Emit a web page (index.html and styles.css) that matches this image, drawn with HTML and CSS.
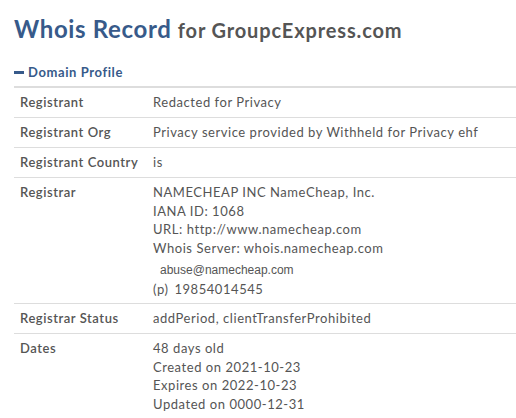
FILE: index.html
```html
<!DOCTYPE html>
<html>
<head>
<meta charset="utf-8">
<link rel="stylesheet" href="styles.css">
</head>
<body>
<div class="page">
  <h1 class="title"><span class="title-main">Whois Record</span> <span class="title-sub">for GroupcExpress.com</span></h1>
  <div class="section-head"><span class="dash"></span><span class="section-name">Domain Profile</span></div>
  <div class="table">
    <div class="row">
      <div class="label">Registrant</div>
      <div class="value">Redacted for Privacy</div>
    </div>
    <div class="row">
      <div class="label">Registrant Org</div>
      <div class="value">Privacy service provided by Withheld for Privacy ehf</div>
    </div>
    <div class="row">
      <div class="label">Registrant Country</div>
      <div class="value">is</div>
    </div>
    <div class="row">
      <div class="label">Registrar</div>
      <div class="value">
        <div>NAMECHEAP INC NameCheap, Inc.</div>
        <div>IANA ID: 1068</div>
        <div>URL: http://www.namecheap.com</div>
        <div>Whois Server: whois.namecheap.com</div>
        <div class="email">abuse@namecheap.com</div>
        <div class="phone"><span class="phone-tag">(p)</span>19854014545</div>
      </div>
    </div>
    <div class="row">
      <div class="label">Registrar Status</div>
      <div class="value">addPeriod, clientTransferProhibited</div>
    </div>
    <div class="row">
      <div class="label">Dates</div>
      <div class="value">
        <div>48 days old</div>
        <div>Created on 2021-10-23</div>
        <div>Expires on 2022-10-23</div>
        <div>Updated on 0000-12-31</div>
      </div>
    </div>
  </div>
</div>
</body>
</html>
```

FILE: styles.css
```css
html, body {
  margin: 0;
  padding: 0;
  background: #fff;
}
body {
  font-family: Lato, "Open Sans", sans-serif;
  color: #555;
  font-size: 13px;
  line-height: 18.67px;
}
.page {
  padding: 11px 0 0 14px;
}
.title {
  margin: 0;
  font-weight: 700;
  line-height: 34px;
  white-space: nowrap;
}
.title-main {
  font-size: 24px;
  color: #375a8a;
  letter-spacing: 0.65px;
}
.title-sub {
  font-size: 20px;
  color: #555;
  letter-spacing: 0.85px;
}
.section-head {
  display: flex;
  align-items: center;
  margin-top: 16px;
  height: 18px;
}
.dash {
  width: 10px;
  height: 3px;
  background: #375a8a;
  margin-right: 4px;
}
.section-name {
  font-size: 13px;
  font-weight: 700;
  color: #375a8a;
  letter-spacing: 0.6px;
}
.table {
  margin-top: 5px;
  border-top: 2px solid #ddd;
}
.row {
  display: flex;
  border-bottom: 1px solid #ddd;
  padding: 5px 0 5.33px 0;
  letter-spacing: 0.55px;
}
.label {
  width: 133px;
  padding-left: 6px;
  flex: none;
  font-weight: 600;
  color: #555;
}
.value {
  color: #555;
  white-space: nowrap;
}
.email {
  font-family: "Liberation Sans", Arial, sans-serif;
  font-size: 12px;
  letter-spacing: 0;
  padding-left: 7px;
  margin-top: 3px;
  line-height: 19px;
}
.phone {
  line-height: 18px;
}
.phone-tag {
  margin-right: 6px;
}
```
